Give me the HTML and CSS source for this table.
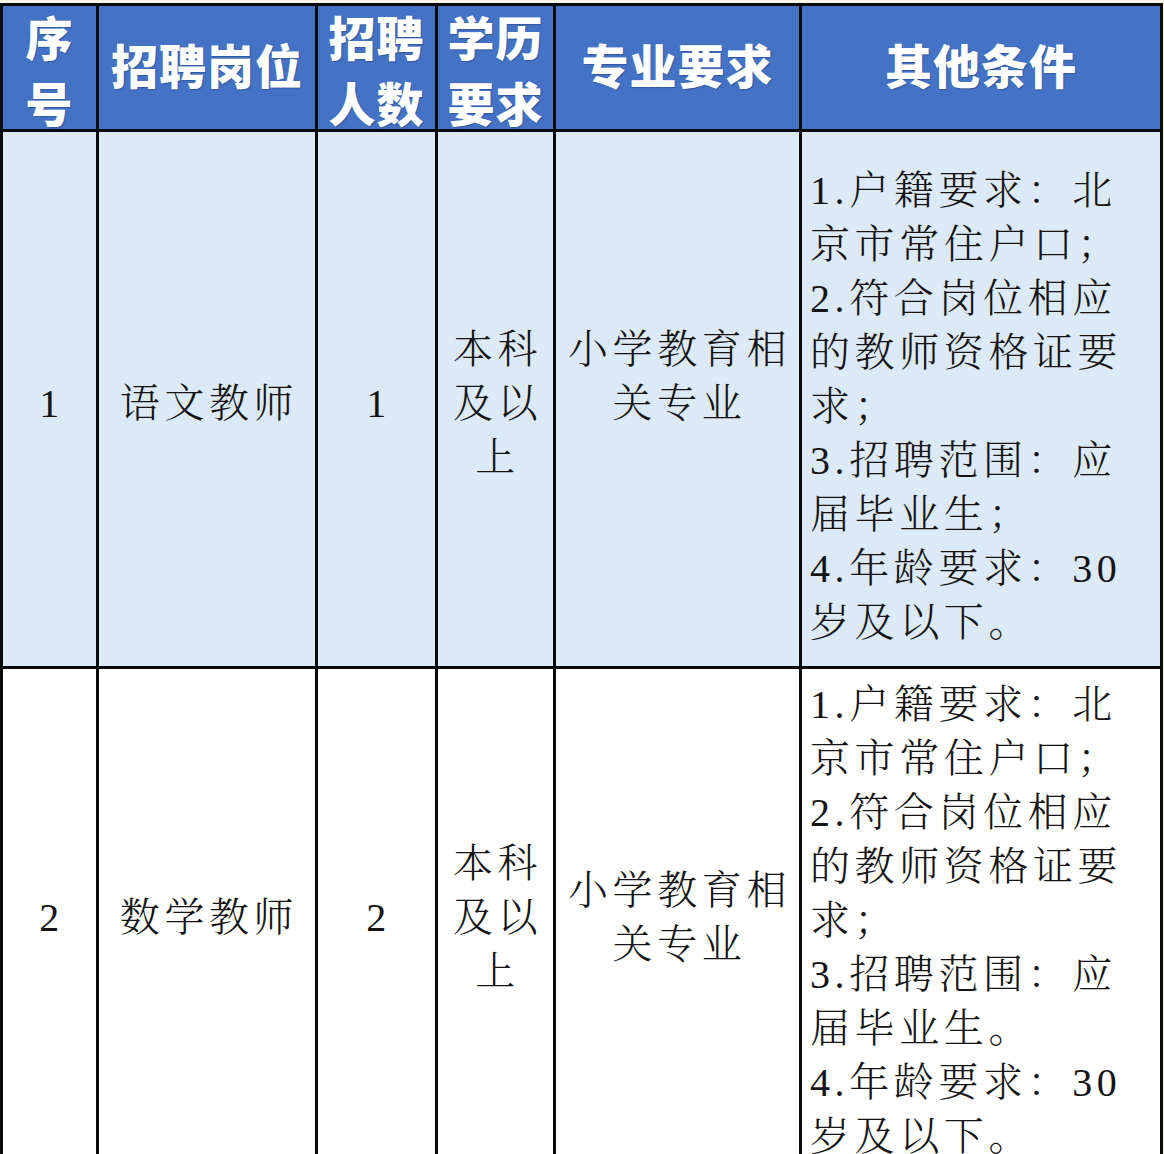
FILE: index.html
```html
<!DOCTYPE html>
<html lang="zh-CN">
<head>
<meta charset="utf-8">
<title>招聘岗位</title>
<link rel="stylesheet" href="styles.css">
</head>
<body>
<div class="sheet">
  <div class="grid">
    <div class="cell head"><div class="stack"><span>序</span><span>号</span></div></div>
    <div class="cell head"><span class="one">招聘岗位</span></div>
    <div class="cell head"><div class="stack"><span>招聘</span><span>人数</span></div></div>
    <div class="cell head"><div class="stack"><span>学历</span><span>要求</span></div></div>
    <div class="cell head"><span class="one">专业要求</span></div>
    <div class="cell head"><span class="one">其他条件</span></div>

    <div class="cell body alt"><span>1</span></div>
    <div class="cell body alt"><span>语文教师</span></div>
    <div class="cell body alt"><span>1</span></div>
    <div class="cell body alt"><span>本科<br>及以<br>上</span></div>
    <div class="cell body alt raise"><span>小学教育相<br>关专业</span></div>
    <div class="cell body alt left"><span>1.户籍要求：北<br>京市常住户口；<br>2.符合岗位相应<br>的教师资格证要<br>求；<br>3.招聘范围：应<br>届毕业生；<br>4.年龄要求：30<br>岁及以下。</span></div>

    <div class="cell body"><span>2</span></div>
    <div class="cell body"><span>数学教师</span></div>
    <div class="cell body"><span>2</span></div>
    <div class="cell body"><span>本科<br>及以<br>上</span></div>
    <div class="cell body"><span>小学教育相<br>关专业</span></div>
    <div class="cell body left"><span>1.户籍要求：北<br>京市常住户口；<br>2.符合岗位相应<br>的教师资格证要<br>求；<br>3.招聘范围：应<br>届毕业生。<br>4.年龄要求：30<br>岁及以下。</span></div>
  </div>
</div>
</body>
</html>
```

FILE: styles.css
```css
html, body {
  margin: 0;
  padding: 0;
  background: #fbf5e7;
}

body {
  width: 1164px;
  height: 1154px;
  overflow: hidden;
}

.sheet {
  padding-top: 3px;
}

.grid {
  width: 1157px;
  display: grid;
  grid-template-columns: 93px 216px 117px 115px 243px 358px;
  grid-template-rows: 123px 534px 497px;
  gap: 3px;
  padding: 3px;
  background: #0a0a0a;
}

.cell {
  display: flex;
  align-items: center;
  justify-content: center;
  text-align: center;
}

.head {
  background: #4472c4;
  color: #ffffff;
  font-family: "Noto Sans CJK SC", "Noto Sans", sans-serif;
  font-weight: 900;
  font-size: 47px;
  line-height: 50px;
  letter-spacing: 1px;
  text-shadow: 1px 1px 1px rgba(20, 40, 90, 0.35);
}

.head .one {
  padding-bottom: 8px;
}

.stack {
  display: flex;
  flex-direction: column;
  align-items: center;
  gap: 16px;
  padding-top: 3px;
}

.body {
  background: #ffffff;
  color: #141414;
  font-family: "Liberation Serif", "Noto Serif CJK SC", "Noto Sans CJK SC", serif;
  font-weight: 300;
  font-size: 40px;
  line-height: 54px;
  letter-spacing: 4.6px;
  overflow: hidden;
}

.body span {
  padding-left: 4px;
}

.alt {
  background: #dce9f7;
}

.alt span {
  padding-top: 10px;
}

.raise span {
  padding-bottom: 54px;
}

.left {
  justify-content: flex-start;
  text-align: left;
  padding-left: 8px;
}

.left span {
  padding-left: 0;
  padding-top: 6px;
}

.alt.left span {
  padding-top: 16px;
}
```
